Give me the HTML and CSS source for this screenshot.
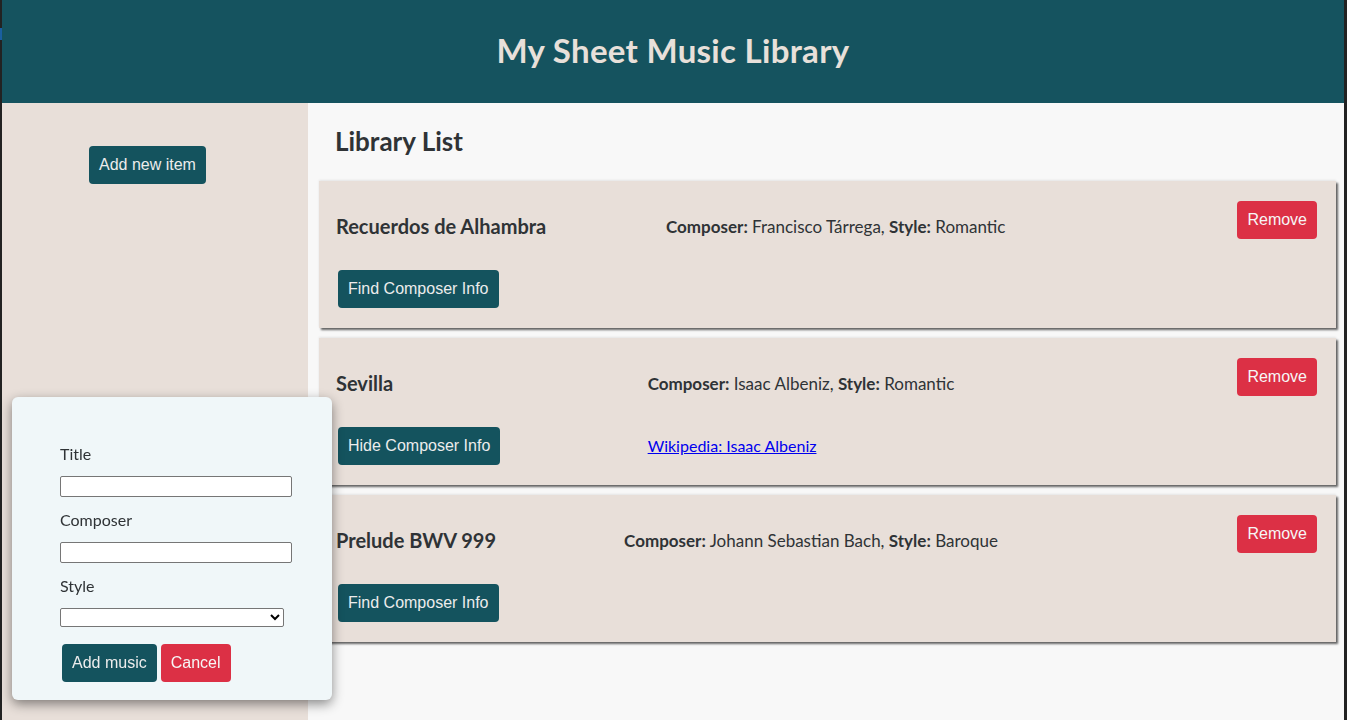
FILE: index.html
```html
<!DOCTYPE html>
<html lang="en">
<head>
<meta charset="utf-8">
<title>My Sheet Music Library</title>
<link rel="stylesheet" href="styles.css">
</head>
<body>
<div class="app">
  <header class="app-header">
    <h1 class="app-title">My Sheet Music Library</h1>
  </header>
  <div class="app-body">
    <aside class="sidebar">
      <button class="btn btn-teal">Add new item</button>
    </aside>
    <main class="main">
      <h2 class="list-heading">Library List</h2>

      <div class="card">
        <div class="col col-title">
          <h3 class="item-title">Recuerdos de Alhambra</h3>
          <button class="btn btn-teal">Find Composer Info</button>
        </div>
        <div class="col col-details">
          <p class="item-details"><b>Composer:</b> Francisco Tárrega, <b>Style:</b> Romantic</p>
        </div>
        <div class="col col-actions">
          <button class="btn btn-red btn-remove">Remove</button>
        </div>
      </div>

      <div class="card">
        <div class="col col-title">
          <h3 class="item-title">Sevilla</h3>
          <button class="btn btn-teal">Hide Composer Info</button>
        </div>
        <div class="col col-details">
          <p class="item-details"><b>Composer:</b> Isaac Albeniz, <b>Style:</b> Romantic</p>
          <a class="item-link" href="#">Wikipedia: Isaac Albeniz</a>
        </div>
        <div class="col col-actions">
          <button class="btn btn-red btn-remove">Remove</button>
        </div>
      </div>

      <div class="card">
        <div class="col col-title">
          <h3 class="item-title">Prelude BWV 999</h3>
          <button class="btn btn-teal">Find Composer Info</button>
        </div>
        <div class="col col-details">
          <p class="item-details"><b>Composer:</b> Johann Sebastian Bach, <b>Style:</b> Baroque</p>
        </div>
        <div class="col col-actions">
          <button class="btn btn-red btn-remove">Remove</button>
        </div>
      </div>
    </main>
  </div>
</div>

<div class="modal">
  <form class="modal-form">
    <label class="field-label" for="title">Title</label>
    <input class="field-input" id="title" type="text">
    <label class="field-label" for="composer">Composer</label>
    <input class="field-input" id="composer" type="text">
    <label class="field-label" for="style">Style</label>
    <select class="field-select" id="style">
      <option></option>
    </select>
    <div class="modal-actions"><button type="button" class="btn btn-teal">Add music</button><button type="button" class="btn btn-red">Cancel</button></div>
  </form>
</div>
</body>
</html>
```

FILE: styles.css
```css
html, body {
  margin: 0;
  padding: 0;
  height: 100%;
}

body {
  background: linear-gradient(#1a5fa0, #1a5fa0) 0 28px / 2px 12px no-repeat, #222;
  font-family: "Lato", "Noto Sans", sans-serif;
  color: #2f3336;
}

.app {
  margin: 0 3px 0 2px;
  min-height: 100vh;
  display: flex;
  flex-direction: column;
}

.app-header {
  height: 103px;
  background: #15535f;
  display: flex;
  align-items: center;
  justify-content: center;
}

.app-title {
  margin: 0;
  font-size: 33px;
  line-height: 38px;
  letter-spacing: 0.3px;
  font-weight: 700;
  color: #e8e0da;
  padding-bottom: 4px;
}

.app-body {
  flex: 1;
  display: flex;
}

.sidebar {
  width: 306px;
  flex: none;
  background: #e8dfd9;
  box-sizing: border-box;
  padding: 41px 0 0 85px;
}

.main {
  flex: 1;
  background: #f8f8f8;
  padding: 0 8px 10px 11px;
}

.list-heading {
  margin: 24px 0 26px 16px;
  font-size: 26px;
  line-height: 28px;
  font-weight: 700;
  color: #2f3336;
}

.btn {
  font-family: "Liberation Sans", Arial, sans-serif;
  font-size: 16px;
  line-height: 18px;
  padding: 10px;
  margin: 2px;
  border: none;
  border-radius: 4px;
  cursor: pointer;
}

.btn-teal {
  background: #14535e;
  color: #ececec;
}

.btn-red {
  background: #dc3045;
  color: #f6f6f6;
}

.card {
  display: flex;
  background: #e8dfd9;
  padding: 20px 7px 18px 17px;
  margin-bottom: 10px;
  box-shadow: 2px 2px 2px rgba(0, 0, 0, 0.6), 0 -1px 2px rgba(0, 0, 0, 0.08);
}

.col {
  flex: 1 1 auto;
}

.col-actions {
  flex: 1 1 84px;
  text-align: right;
}

.btn-remove {
  margin: 0 12px 0 2px;
}

.col-title .btn {
  display: block;
}

.item-title {
  margin: 14px 0 33px 0;
  font-size: 20px;
  line-height: 22px;
  font-weight: 700;
  color: #2f3336;
  white-space: nowrap;
}

.item-details {
  margin: 15px 0 32px 0;
  font-size: 17px;
  line-height: 22px;
  white-space: nowrap;
}

.item-details b {
  font-weight: 700;
}

.item-link {
  display: block;
  font-size: 16px;
  line-height: 38px;
  margin-top: 2px;
  color: #0000ee;
  white-space: nowrap;
}

.modal {
  position: fixed;
  left: 12px;
  top: 397px;
  width: 320px;
  background: #f0f7f9;
  border-radius: 6px;
  box-shadow: 0 4px 12px rgba(0, 0, 0, 0.45);
}

.modal-form {
  padding: 46px 0 16px 48px;
}

.field-label {
  display: block;
  font-size: 16px;
  line-height: 22px;
  margin-bottom: 11px;
  color: #2f3336;
}

.field-input {
  display: block;
  box-sizing: border-box;
  width: 232px;
  height: 21px;
  margin: 0 0 12px 0;
  border: 1px solid #767676;
  border-radius: 2px;
  background: #fff;
  padding: 1px 2px;
}

.field-select {
  display: block;
  box-sizing: border-box;
  width: 224px;
  height: 19px;
  margin: 0 0 15px 0;
  border: 1px solid #767676;
  border-radius: 2px;
  background: #fff;
  font-size: 13px;
}

.modal-actions {
  display: flex;
}
```
